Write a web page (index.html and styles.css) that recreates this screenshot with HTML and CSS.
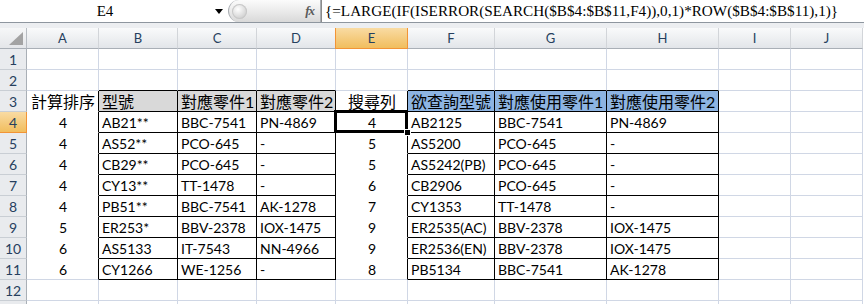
FILE: index.html
```html
<!DOCTYPE html>
<html lang="zh-Hant">

<head>
    <meta charset="UTF-8">
    <title>搜尋列</title>
    <link rel="stylesheet" href="styles.css">
</head>

<body>

    <!-- Barra de fórmulas -->
    <div class="fbar">
        <div class="namebox">E4</div>
        <div class="drop"><svg width="8" height="5" viewBox="0 0 8 5"><path d="M0 0H8L4 5Z" fill="#000"/></svg></div>
        <div class="fxpill">
            <span class="knob"></span>
            <span class="fx">fx</span>
        </div>
        <div class="formula">{=LARGE(IF(ISERROR(SEARCH($B$4:$B$11,F4)),0,1)*ROW($B$4:$B$11),1)}</div>
    </div>
    <div class="gap"></div>

    <div class="sheet">
        <!-- cabeçalho das colunas -->
        <div class="row">
            <div class="corner"><svg width="14" height="13" viewBox="0 0 14 13"><path d="M0 13H14V0Z" fill="#a3a3a3"/></svg></div>
            <div class="ch">A</div>
            <div class="ch">B</div>
            <div class="ch">C</div>
            <div class="ch">D</div>
            <div class="ch sel">E</div>
            <div class="ch">F</div>
            <div class="ch">G</div>
            <div class="ch">H</div>
            <div class="ch">I</div>
            <div class="ch">J</div>
        </div>

        <div class="row">
            <div class="rh">1</div>
            <div class="c"></div><div class="c"></div><div class="c"></div><div class="c"></div><div class="c"></div>
            <div class="c"></div><div class="c"></div><div class="c"></div><div class="c"></div><div class="c"></div>
        </div>

        <div class="row">
            <div class="rh">2</div>
            <div class="c"></div><div class="c bb"></div><div class="c bb"></div><div class="c bb"></div><div class="c"></div>
            <div class="c bb"></div><div class="c bb"></div><div class="c bb"></div><div class="c"></div><div class="c"></div>
        </div>

        <div class="row">
            <div class="rh">3</div>
            <div class="c wf rb num zh">計算排序</div>
            <div class="c bx zh gray">型號</div>
            <div class="c bx zh gray">對應零件1</div>
            <div class="c bx zh gray">對應零件2</div>
            <div class="c wf rb num zh">搜尋列</div>
            <div class="c bx zh blue">欲查詢型號</div>
            <div class="c bx zh blue">對應使用零件1</div>
            <div class="c bx zh blue">對應使用零件2</div>
            <div class="c"></div><div class="c"></div>
        </div>

        <div class="row">
            <div class="rh sel">4</div>
            <div class="c wf rb num">4</div>
            <div class="c bx">AB21**</div>
            <div class="c bx">BBC-7541</div>
            <div class="c bx">PN-4869</div>
            <div class="c wf rb num active">4</div>
            <div class="c bx">AB2125</div>
            <div class="c bx">BBC-7541</div>
            <div class="c bx">PN-4869</div>
            <div class="c"></div><div class="c"></div>
        </div>

        <div class="row">
            <div class="rh">5</div>
            <div class="c wf rb num">4</div>
            <div class="c bx">AS52**</div>
            <div class="c bx">PCO-645</div>
            <div class="c bx">-</div>
            <div class="c wf rb num">5</div>
            <div class="c bx">AS5200</div>
            <div class="c bx">PCO-645</div>
            <div class="c bx">-</div>
            <div class="c"></div><div class="c"></div>
        </div>

        <div class="row">
            <div class="rh">6</div>
            <div class="c wf rb num">4</div>
            <div class="c bx">CB29**</div>
            <div class="c bx">PCO-645</div>
            <div class="c bx">-</div>
            <div class="c wf rb num">5</div>
            <div class="c bx">AS5242(PB)</div>
            <div class="c bx">PCO-645</div>
            <div class="c bx">-</div>
            <div class="c"></div><div class="c"></div>
        </div>

        <div class="row">
            <div class="rh">7</div>
            <div class="c wf rb num">4</div>
            <div class="c bx">CY13**</div>
            <div class="c bx">TT-1478</div>
            <div class="c bx">-</div>
            <div class="c wf rb num">6</div>
            <div class="c bx">CB2906</div>
            <div class="c bx">PCO-645</div>
            <div class="c bx">-</div>
            <div class="c"></div><div class="c"></div>
        </div>

        <div class="row">
            <div class="rh">8</div>
            <div class="c wf rb num">4</div>
            <div class="c bx">PB51**</div>
            <div class="c bx">BBC-7541</div>
            <div class="c bx">AK-1278</div>
            <div class="c wf rb num">7</div>
            <div class="c bx">CY1353</div>
            <div class="c bx">TT-1478</div>
            <div class="c bx">-</div>
            <div class="c"></div><div class="c"></div>
        </div>

        <div class="row">
            <div class="rh">9</div>
            <div class="c wf rb num">5</div>
            <div class="c bx">ER253*</div>
            <div class="c bx">BBV-2378</div>
            <div class="c bx">IOX-1475</div>
            <div class="c wf rb num">9</div>
            <div class="c bx">ER2535(AC)</div>
            <div class="c bx">BBV-2378</div>
            <div class="c bx">IOX-1475</div>
            <div class="c"></div><div class="c"></div>
        </div>

        <div class="row">
            <div class="rh">10</div>
            <div class="c wf rb num">6</div>
            <div class="c bx">AS5133</div>
            <div class="c bx">IT-7543</div>
            <div class="c bx">NN-4966</div>
            <div class="c wf rb num">9</div>
            <div class="c bx">ER2536(EN)</div>
            <div class="c bx">BBV-2378</div>
            <div class="c bx">IOX-1475</div>
            <div class="c"></div><div class="c"></div>
        </div>

        <div class="row">
            <div class="rh">11</div>
            <div class="c rb num">6</div>
            <div class="c bx">CY1266</div>
            <div class="c bx">WE-1256</div>
            <div class="c bx">-</div>
            <div class="c rb num">8</div>
            <div class="c bx">PB5134</div>
            <div class="c bx">BBC-7541</div>
            <div class="c bx">AK-1278</div>
            <div class="c"></div><div class="c"></div>
        </div>

        <div class="row">
            <div class="rh">12</div>
            <div class="c"></div><div class="c"></div><div class="c"></div><div class="c"></div><div class="c"></div>
            <div class="c"></div><div class="c"></div><div class="c"></div><div class="c"></div><div class="c"></div>
        </div>

        <!-- linha 13, cortada pela janela -->
        <div class="row">
            <div class="rh"></div>
            <div class="c"></div><div class="c"></div><div class="c"></div><div class="c"></div><div class="c"></div>
            <div class="c"></div><div class="c"></div><div class="c"></div><div class="c"></div><div class="c"></div>
        </div>
    </div>

</body>

</html>
```

FILE: styles.css
```css
/* Geral */
body {
    margin: 0;
    background: #fff;
    overflow: hidden;
    font-family: Lato, "Noto Sans CJK TC", sans-serif;
    color: #000;
}

/* Barra de fórmulas */
.fbar {
    display: flex;
    height: 23px;
    box-sizing: border-box;
    border-bottom: 1px solid #8e969f;
}

.namebox {
    width: 210px;
    display: flex;
    align-items: center;
    justify-content: center;
    font: 15px "Liberation Serif", serif;
}

.drop {
    width: 18px;
    display: flex;
    align-items: center;
    justify-content: center;
}

.fxpill {
    width: 93px;
    box-sizing: border-box;
    display: flex;
    align-items: center;
    justify-content: space-between;
    background: linear-gradient(#fbfbfb, #e9e9e9 55%, #d9d9d9);
    border: 1px solid #a9adb2;
    border-top: none;
    border-bottom: none;
    border-radius: 11px 0 0 11px;
}

.knob {
    width: 15px;
    height: 15px;
    margin-left: 3px;
    border-radius: 50%;
    background: radial-gradient(circle at 40% 35%, #ffffff, #d8d8d8 60%, #b9b9b9);
    box-shadow: inset 0 0 0 1px #c8c8c8;
}

.fx {
    font: italic bold 13px "Liberation Serif", serif;
    color: #5b5b5b;
    margin-right: 6px;
    letter-spacing: -1px;
}

.formula {
    flex: 1;
    display: flex;
    align-items: center;
    padding-left: 3px;
    border-left: 1px solid #8b8b8b;
    font: 15.2px "Liberation Serif", serif;
    white-space: nowrap;
    overflow: hidden;
}

.gap {
    height: 5px;
    background: #eceef1;
}

/* Planilha */
.row {
    display: grid;
    grid-template-columns: 27px 72px 79px 79px 79px 72px 87px 112px 112px 72px 72px;
    height: 21px;
}

.corner,
.ch,
.rh,
.c {
    box-sizing: border-box;
    display: flex;
    white-space: nowrap;
    overflow: hidden;
}

.corner {
    align-items: flex-end;
    justify-content: flex-end;
    padding: 0 3px 3px 0;
    background: linear-gradient(#f6f7f8, #e4e6e9);
    border-right: 1px solid #b7bcc2;
    border-bottom: 1px solid #a9afb6;
}

.ch {
    align-items: center;
    justify-content: center;
    font-size: 13px;
    color: #263f5e;
    background: linear-gradient(#f9fafb, #eef0f2 50%, #e2e5e9);
    border-right: 1px solid #d2d5d9;
    border-bottom: 1px solid #a9afb6;
}

.rh {
    align-items: center;
    justify-content: center;
    font-size: 14px;
    color: #263f5e;
    background: #e9ebee;
    border-right: 1px solid #a9afb6;
    border-bottom: 1px solid #c9ced4;
}

.ch.sel,
.rh.sel {
    background: linear-gradient(#f9dba3, #f5cc80 50%, #f1be5e);
    border-color: #f29436;
}

.ch.sel {
    border-left: 1px solid #f29436;
    margin-left: -1px;
}

.c {
    align-items: flex-end;
    padding: 0 2px 1px 3px;
    font-size: 14px;
    line-height: 16px;
    border-right: 1px solid #d0d7e5;
    border-bottom: 1px solid #d0d7e5;
}

.num {
    justify-content: center;
}

.zh {
    font-size: 16px;
    padding-bottom: 1px;
}

/* Preenchimento branco esconde as linhas de grade */
.wf {
    border-bottom-color: #fff;
}

/* Bordas pretas */
.bx {
    border-right-color: #000;
    border-bottom-color: #000;
}

.rb {
    border-right-color: #000;
}

.bb {
    border-bottom-color: #000;
}

.gray {
    background: #d9d9d9;
}

.blue {
    background: #8db4e2;
}

/* Célula ativa */
.active {
    position: relative;
    overflow: visible;
}

.active::after {
    content: "";
    position: absolute;
    top: -2px;
    left: -2px;
    right: -1px;
    bottom: -1px;
    border: 3px solid #000;
}

.active::before {
    content: "";
    position: absolute;
    right: -4px;
    bottom: -4px;
    width: 5px;
    height: 5px;
    background: #000;
    border: 1px solid #fff;
    z-index: 1;
}
```
